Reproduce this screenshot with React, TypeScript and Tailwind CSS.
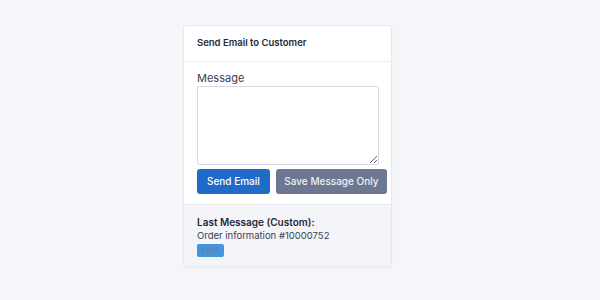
export default function App() {
  return (
    <div
      className="w-[600px] h-[300px] bg-[#f5f6fa] flex pl-[183px] pt-[25px]"
      style={{ fontFamily: 'Inter, "Noto Sans", sans-serif' }}
    >
      <div className="w-[209px] h-[242px] bg-white border border-[#e6e8ee] rounded-[3px] shadow-[0_1px_2px_rgba(0,0,0,0.04)] flex flex-col">
        {/* Header */}
        <div className="h-[36px] shrink-0 flex items-center px-[13px] border-b border-[#eceef2]">
          <h2 className="text-[9.5px] font-semibold text-[#1f2937]">Send Email to Customer</h2>
        </div>

        {/* Body */}
        <div className="px-[13px] pt-[9px] pb-[10px]">
          <label className="block text-[11px] text-[#374151] leading-[14px] mb-[1px]">Message</label>
          <textarea className="block w-[182px] h-[79px] border border-[#d7dbe1] rounded-[2px] resize-y" />
          <div className="flex gap-[6px] mt-[4px] w-[200px]">
            <button className="h-[25px] px-[10px] rounded-[3px] bg-[#1f6bc7] text-white text-[10px] font-medium whitespace-nowrap">
              Send Email
            </button>
            <button className="h-[25px] px-[8.5px] rounded-[3px] bg-[#6c7891] text-[#eef0f4] text-[10px] font-medium whitespace-nowrap">
              Save Message Only
            </button>
          </div>
        </div>

        {/* Footer */}
        <div className="flex-1 bg-[#f4f5f9] border-t border-[#e6e8ee] px-[13px] pt-[10px]">
          <p className="text-[10px] font-semibold text-[#1f2937] leading-[14px]">Last Message (Custom):</p>
          <p className="text-[9.5px] text-[#374151] leading-[14px]">Order information #10000752</p>
          <span className="block w-fit mt-[1px] px-[5px] h-[13px] leading-[13px] rounded-[2px] bg-[#3f95e0] text-[#6b7da0] text-[8.5px]">
            sent
          </span>
        </div>
      </div>
    </div>
  );
}
